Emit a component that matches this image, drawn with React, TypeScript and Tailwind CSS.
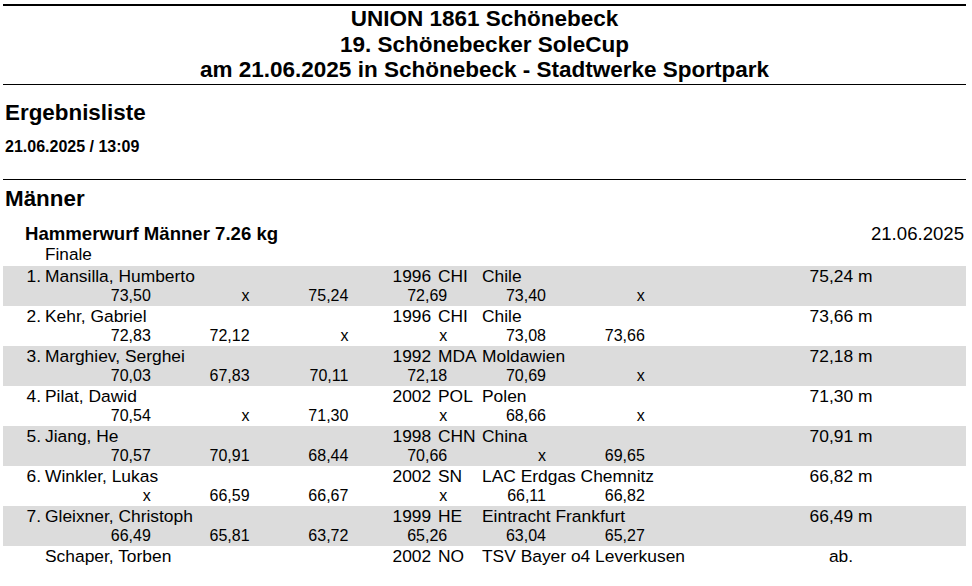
const FONT = "font-['Liberation_Sans',Arial,sans-serif]";

type Athlete = {
  rank: string;
  name: string;
  year: string;
  country: string;
  club: string;
  result: string;
  attempts?: string[];
};

const ATHLETES: Athlete[] = [
  { rank: "1.", name: "Mansilla, Humberto", year: "1996", country: "CHI", club: "Chile", result: "75,24 m", attempts: ["73,50", "x", "75,24", "72,69", "73,40", "x"] },
  { rank: "2.", name: "Kehr, Gabriel", year: "1996", country: "CHI", club: "Chile", result: "73,66 m", attempts: ["72,83", "72,12", "x", "x", "73,08", "73,66"] },
  { rank: "3.", name: "Marghiev, Serghei", year: "1992", country: "MDA", club: "Moldawien", result: "72,18 m", attempts: ["70,03", "67,83", "70,11", "72,18", "70,69", "x"] },
  { rank: "4.", name: "Pilat, Dawid", year: "2002", country: "POL", club: "Polen", result: "71,30 m", attempts: ["70,54", "x", "71,30", "x", "68,66", "x"] },
  { rank: "5.", name: "Jiang, He", year: "1998", country: "CHN", club: "China", result: "70,91 m", attempts: ["70,57", "70,91", "68,44", "70,66", "x", "69,65"] },
  { rank: "6.", name: "Winkler, Lukas", year: "2002", country: "SN", club: "LAC Erdgas Chemnitz", result: "66,82 m", attempts: ["x", "66,59", "66,67", "x", "66,11", "66,82"] },
  { rank: "7.", name: "Gleixner, Christoph", year: "1999", country: "HE", club: "Eintracht Frankfurt", result: "66,49 m", attempts: ["66,49", "65,81", "63,72", "65,26", "63,04", "65,27"] },
  { rank: "", name: "Schaper, Torben", year: "2002", country: "NO", club: "TSV Bayer o4 Leverkusen", result: "ab." },
];

function AthleteRow({ a, shaded }: { a: Athlete; shaded: boolean }) {
  return (
    <div className={shaded ? "bg-[#dcdcdc]" : ""}>
      {/* name line */}
      <div className="flex h-[20px] items-start text-[17.4px] leading-[20px] whitespace-nowrap">
        <div className="w-[38px] text-right">{a.rank}</div>
        <div className="ml-[4px] w-[347.5px]">{a.name}</div>
        <div className="w-[45.5px]">{a.year}</div>
        <div className="w-[44px]">{a.country}</div>
        <div className="w-[299px]">{a.club}</div>
        <div className="w-[120px] text-center">{a.result}</div>
      </div>
      {/* attempts */}
      {a.attempts && (
        <div className="flex h-[20px] pl-[49px] text-[16px] leading-[20px]">
          {a.attempts.map((v, i) => (
            <div key={i} className="w-[98.8px] text-right">
              {v}
            </div>
          ))}
        </div>
      )}
    </div>
  );
}

export default function App() {
  return (
    <div className={`${FONT} min-h-[586px] bg-white pt-[4px] text-black`}>
      <div className="ml-[3px] w-[963px]">
        <div className="border-t-2 border-b border-black pb-[1.5px] text-center text-[22.5px] font-bold leading-[25.5px]">
          <div>UNION 1861 Schönebeck</div>
          <div>19. Schönebecker SoleCup</div>
          <div>am 21.06.2025 in Schönebeck - Stadtwerke Sportpark</div>
        </div>

        <h1 className="mt-[14.5px] pl-[2px] text-[22.4px] font-bold leading-[26px]">Ergebnisliste</h1>
        <div className="mt-[11px] pl-[2px] text-[16px] font-bold leading-[20px]">21.06.2025 / 13:09</div>

        <div className="mt-[22.5px] border-t border-black" />
        <h2 className="mt-[6px] pl-[2px] text-[22.4px] font-bold leading-[26px]">Männer</h2>

        <div className="mt-[12px] flex justify-between pr-[2px] pl-[22px] text-[18.6px] leading-[20px]">
          <span className="font-bold">Hammerwurf Männer 7.26 kg</span>
          <span>21.06.2025</span>
        </div>
        <div className="pl-[42px] text-[17.2px] leading-[20px]">Finale</div>

        <div className="mt-[2px]">
          {ATHLETES.map((a, i) => (
            <AthleteRow key={a.name} a={a} shaded={i % 2 === 0} />
          ))}
        </div>
      </div>
    </div>
  );
}
